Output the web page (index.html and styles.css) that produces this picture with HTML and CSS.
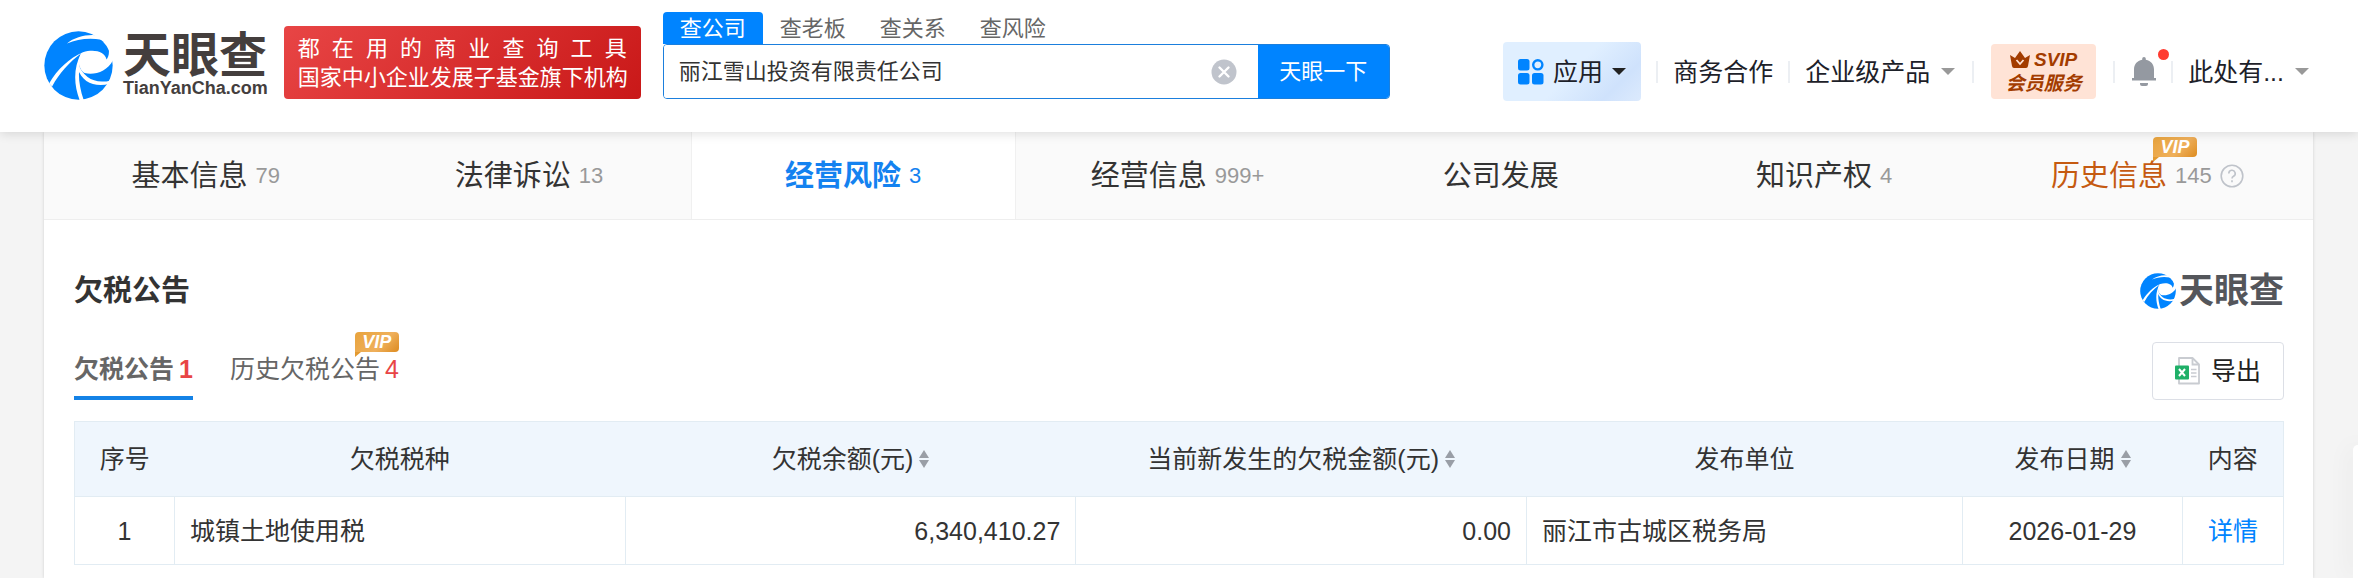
FILE: index.html
```html
<!DOCTYPE html>
<html lang="zh-CN">
<head>
  <meta charset="UTF-8">
  <title>天眼查</title>
  <link rel="stylesheet" href="styles.css">
</head>
<body>

  <!-- Shared logo mark -->
  <svg class="defs" width="0" height="0" aria-hidden="true">
    <symbol id="mark" viewBox="0 0 204 204">
      <circle cx="102" cy="102" r="101" fill="#0084ff"/>
      <path fill="#fff" d="M68 37C92 17 130 8 164 14L170 26C134 19 98 24 68 37Z"/>
      <path fill="#fff" d="M206 48L191 50C194 68 190 78 185 84C180 62 150 52 115 63C75 80 40 113 15 155L24 164C45 125 75 92 110 66C98 85 104 118 120 124C150 132 190 118 206 82Z"/>
      <path fill="#fff" d="M110 66C86 110 88 160 106 206L118 206C104 165 100 130 106 100Z"/>
      <path fill="#fff" d="M102 100C118 138 150 158 198 146L194 156C150 168 112 150 100 112Z"/>
    </symbol>
  </svg>

  <!-- Header -->
  <header class="header">
    <a class="logo" href="#">
      <svg class="logo-mark"><use href="#mark"/></svg>
      <span class="logo-text">
        <span class="logo-name">天眼查</span>
        <span class="logo-domain">TianYanCha.com</span>
      </span>
    </a>
    <div class="slogan">
      <p>都在用的商业查询工具</p>
      <p>国家中小企业发展子基金旗下机构</p>
    </div>

    <form class="search">
      <div class="search-tabs">
        <button type="button" class="search-tab active">查公司</button>
        <button type="button" class="search-tab">查老板</button>
        <button type="button" class="search-tab">查关系</button>
        <button type="button" class="search-tab">查风险</button>
      </div>
      <div class="search-box">
        <input class="search-input" type="text" value="丽江雪山投资有限责任公司" aria-label="搜索公司">
        <button type="button" class="search-clear" aria-label="清空">
          <svg width="26" height="26" viewBox="0 0 26 26"><circle cx="13" cy="13" r="12.5" fill="#c0c4cc"/><path d="M8.5 8.5l9 9M17.5 8.5l-9 9" stroke="#fff" stroke-width="2.4" stroke-linecap="round"/></svg>
        </button>
        <button type="submit" class="search-submit">天眼一下</button>
      </div>
    </form>

    <nav class="nav">
      <button type="button" class="nav-app">
        <svg width="26" height="26" viewBox="0 0 26 26" fill="#0084ff">
          <rect x="0" y="0" width="11.5" height="11.5" rx="2.5"/>
          <rect x="0" y="14" width="11.5" height="11.5" rx="2.5"/>
          <rect x="14" y="14" width="11.5" height="11.5" rx="2.5"/>
          <circle cx="19.8" cy="5.8" r="4.6" fill="none" stroke="#0084ff" stroke-width="2.4"/>
        </svg>
        <span>应用</span>
        <i class="caret dark"></i>
      </button>
      <i class="divider"></i>
      <a class="nav-link" href="#">商务合作</a>
      <i class="divider"></i>
      <button type="button" class="nav-link">企业级产品<i class="caret"></i></button>
      <i class="divider wide"></i>
      <a class="svip" href="#">
        <span class="svip-top">
          <svg width="20" height="17" viewBox="0 0 20 17"><path d="M0 4l5 3 5-7 5 7 5-3-2 11q-.3 2-2 2H4q-1.700 0-2-2z" fill="#a33c00"/><path d="M6.500 9l3.500 4 3.500-4" fill="none" stroke="#ffe3d6" stroke-width="1.800"/></svg>
          <b>SVIP</b>
        </span>
        <span class="svip-bottom">会员服务</span>
      </a>
      <i class="divider wide"></i>
      <button type="button" class="bell" aria-label="消息">
        <svg width="24" height="30" viewBox="0 0 24 30" fill="#9499a1"><path d="M12 0a1.800 1.800 0 0 1 1.800 1.800v.9C19 3.600 22 7.500 22 12.500V21h2v2.500H0V21h2v-8.500C2 7.500 5 3.600 10.200 2.700v-.9A1.800 1.800 0 0 1 12 0z"/><path d="M8 26h8v1q0 2-2 2h-4q-2 0-2-2z"/></svg>
        <i class="bell-dot"></i>
      </button>
      <i class="divider"></i>
      <button type="button" class="nav-link">此处有...<i class="caret"></i></button>
    </nav>
  </header>

  <main class="container">
    <!-- Section tabs -->
    <nav class="tabs">
      <a class="tab" href="#">基本信息<span class="tab-count">79</span></a>
      <a class="tab" href="#">法律诉讼<span class="tab-count">13</span></a>
      <a class="tab active" href="#">经营风险<span class="tab-count">3</span></a>
      <a class="tab" href="#">经营信息<span class="tab-count">999+</span></a>
      <a class="tab" href="#">公司发展</a>
      <a class="tab" href="#">知识产权<span class="tab-count">4</span></a>
      <a class="tab history" href="#">
        <span class="tab-label">历史信息<em class="vip">VIP</em></span><span class="tab-count">145</span>
        <svg class="help" width="24" height="24" viewBox="0 0 24 24" fill="none" stroke="#bfc3ca" stroke-width="1.600"><circle cx="12" cy="12" r="10.800"/><path d="M8.800 9.500a3.200 3.200 0 1 1 4.700 2.800q-1.500.8-1.500 2.200"/><path d="M12 16.300v1.900"/></svg>
      </a>
    </nav>

    <section class="section">
      <div class="section-head">
        <h2>欠税公告</h2>
        <div class="brand">
          <svg class="brand-mark"><use href="#mark"/></svg>
          <span>天眼查</span>
        </div>
      </div>

      <div class="toolbar">
        <div class="subtabs">
          <a class="subtab active" href="#">欠税公告<span class="num">1</span></a>
          <a class="subtab" href="#">历史欠税公告<span class="num">4</span><em class="vip">VIP</em></a>
        </div>
        <button type="button" class="export">
          <svg width="26" height="28" viewBox="0 0 26 28"><path d="M4 1h13.500L24 7.500V26.500H4z" fill="#fff" stroke="#c9ccd1" stroke-width="1.800" stroke-linejoin="round"/><path d="M17.500 1v6.500H24" fill="none" stroke="#c9ccd1" stroke-width="1.800"/><path d="M16 12.500h5.500M16 16h5.500M16 19.500h5.500" stroke="#c9ccd1" stroke-width="1.500"/><rect x="0" y="8.500" width="14" height="14" rx="1" fill="#1fb068"/><path d="M4 12l6 7M10 12l-6 7" stroke="#fff" stroke-width="2"/></svg>
          <span>导出</span>
        </button>
      </div>

      <table class="table">
        <thead>
          <tr>
            <th class="col-index">序号</th>
            <th>欠税税种</th>
            <th><button type="button" class="sort">欠税余额(元)<i class="sort-icon"></i></button></th>
            <th><button type="button" class="sort">当前新发生的欠税金额(元)<i class="sort-icon"></i></button></th>
            <th class="col-unit">发布单位</th>
            <th class="col-date"><button type="button" class="sort">发布日期<i class="sort-icon"></i></button></th>
            <th class="col-action">内容</th>
          </tr>
        </thead>
        <tbody>
          <tr>
            <td class="center">1</td>
            <td>城镇土地使用税</td>
            <td class="right">6,340,410.27</td>
            <td class="right">0.00</td>
            <td>丽江市古城区税务局</td>
            <td class="center">2026-01-29</td>
            <td class="center"><a class="detail" href="#">详情</a></td>
          </tr>
        </tbody>
      </table>
    </section>
  </main>

  <aside class="side-panel"></aside>

</body>
</html>
```
FILE: styles.css
```css
* {
  box-sizing: border-box;
}
body {
  margin: 0;
  min-height: 100vh;
  display: flex;
  flex-direction: column;
  overflow: hidden;
  background: #f4f4f4;
  color: #333;
  font-family: "Liberation Sans", "Noto Sans CJK SC", sans-serif;
  font-size: 25px;
  line-height: 36px;
}
a {
  color: inherit;
  text-decoration: none;
}
button {
  padding: 0;
  border: none;
  background: none;
  color: inherit;
  font: inherit;
  cursor: pointer;
}
h2, p {
  margin: 0;
}
em, i {
  font-style: normal;
}
.defs {
  position: absolute;
}

/* Header */
.header {
  position: relative;
  z-index: 2;
  display: flex;
  align-items: flex-end;
  padding: 12px 49px 33px 44px;
  background: #fff;
  box-shadow: 0 2px 10px rgba(0, 0, 0, 0.12);
}
.logo {
  display: flex;
  align-items: center;
  gap: 10px;
  height: 68px;
  color: #443e3d;
  font-weight: bold;
}
.logo-mark {
  width: 69px;
  height: 69px;
}
.logo-text {
  display: flex;
  flex-direction: column;
}
.logo-name {
  font-size: 48px;
  line-height: 46px;
}
.logo-domain {
  font-size: 18px;
  line-height: 18px;
}
.slogan {
  width: 357px;
  height: 73px;
  margin-left: 16px;
  padding: 8px 14px;
  border-radius: 4px;
  background: linear-gradient(135deg, #e84545, #c91818);
  color: #fff;
  font-size: 22px;
  line-height: 29px;
  white-space: nowrap;
}
.slogan p {
  text-align-last: justify;
}
.search {
  flex: none;
  width: 727px;
  margin-left: 22px;
  font-size: 22px;
}
.search-tabs {
  display: flex;
}
.search-tab {
  width: 100px;
  height: 32px;
  border-radius: 4px 4px 0 0;
  color: #666;
  line-height: 34px;
}
.search-tab.active {
  background: #0084ff;
  color: #fff;
}
.search-box {
  display: flex;
  height: 55px;
  border: 1px solid #1b7fdd;
  border-radius: 4px;
  overflow: hidden;
}
.search-input {
  flex: 1;
  min-width: 0;
  padding: 0 15px;
  border: none;
  outline: none;
  color: #333;
  font: inherit;
}
.search-clear {
  display: flex;
  align-items: center;
  margin-right: 21px;
}
.search-submit {
  width: 131px;
  background: #0084ff;
  color: #fff;
}

/* Header navigation */
.nav {
  display: flex;
  align-items: center;
  height: 55px;
  margin-left: auto;
  color: #1d2129;
  white-space: nowrap;
}
.nav-app {
  display: flex;
  align-items: center;
  gap: 9px;
  height: 59px;
  padding: 0 15px;
  border-radius: 4px;
  background: linear-gradient(135deg, #e0efff 50%, #cfe2fc 80%, #dceafd);
}
.nav-link {
  display: flex;
  align-items: center;
  gap: 11px;
}
.caret {
  width: 0;
  height: 0;
  border: 7px solid transparent;
  border-top-color: #999;
  border-bottom: none;
}
.caret.dark {
  border-top-color: #222;
}
.divider {
  width: 2px;
  height: 22px;
  margin: 0 15px;
  background: #eceff3;
}
.divider.wide {
  margin: 0 17px;
}
.svip {
  display: flex;
  flex-direction: column;
  align-items: center;
  justify-content: center;
  width: 105px;
  height: 55px;
  border-radius: 4px;
  background: #ffe3d6;
  color: #a33c00;
  font-size: 19px;
  font-weight: bold;
  font-style: italic;
  line-height: 24px;
}
.svip-top {
  display: flex;
  align-items: center;
  gap: 4px;
}
.bell {
  position: relative;
  display: flex;
}
.bell-dot {
  position: absolute;
  top: -8px;
  right: -13px;
  width: 11px;
  height: 11px;
  border-radius: 50%;
  background: #ff3b30;
}

/* Content */
.container {
  flex: 1;
  margin: 0 45px 0 44px;
  background: #fff;
  box-shadow: 0 0 3px rgba(0, 0, 0, 0.15);
}
.tabs {
  display: flex;
  height: 88px;
  padding-right: 4px;
  border-bottom: 1px solid #eee;
  background: #fafafa;
  font-size: 29px;
}
.tab {
  flex: 1;
  display: flex;
  align-items: center;
  justify-content: center;
  gap: 8px;
}
.tab.active {
  border: 1px solid #f0f0f0;
  border-width: 0 1px;
  background: #fff;
  color: #1482f0;
  font-weight: bold;
}
.tab-count {
  color: #999;
  font-size: 22px;
  font-weight: normal;
}
.tab.active .tab-count {
  color: #1482f0;
}
.tab.history {
  color: #c55a11;
}
.tab-label {
  position: relative;
}
.vip {
  position: absolute;
  top: -21px;
  right: -30px;
  width: 44px;
  height: 20px;
  border-radius: 4px 4px 4px 0;
  background: linear-gradient(135deg, #e8a33c, #efb05c 60%, #dd8b1f);
  color: #fff;
  font-size: 18px;
  font-style: italic;
  font-weight: bold;
  line-height: 20px;
  text-align: center;
}
.vip::after {
  content: "";
  position: absolute;
  top: 20px;
  left: 0;
  border-top: 5px solid #e39a30;
  border-right: 6px solid transparent;
}
.section {
  padding: 50px 29px 0 30px;
}
.section-head {
  display: flex;
  align-items: center;
  justify-content: space-between;
}
.section-head h2 {
  font-size: 29px;
  line-height: 42px;
}
.brand {
  display: flex;
  align-items: center;
  gap: 3px;
  color: #54565b;
  font-size: 35px;
  font-weight: bold;
}
.brand-mark {
  width: 36px;
  height: 36px;
}
.toolbar {
  display: flex;
  align-items: flex-end;
  justify-content: space-between;
  margin-top: 30px;
}
.subtabs {
  display: flex;
  gap: 37px;
  color: #666;
}
.subtab {
  position: relative;
  display: flex;
  gap: 5px;
  height: 49px;
}
.subtab.active {
  border-bottom: 4px solid #1482e6;
  font-weight: bold;
}
.subtab .vip {
  top: -19px;
  right: 0;
}
.num {
  color: #e84545;
}
.export {
  display: flex;
  align-items: center;
  gap: 10px;
  height: 58px;
  padding: 0 22px;
  border: 1px solid #dcdfe6;
  border-radius: 4px;
  color: #222;
}

/* Table */
.table {
  width: 100%;
  margin-top: 21px;
  border: 1px solid #e2ecf3;
  border-collapse: collapse;
  table-layout: fixed;
}
.table th {
  height: 75px;
  padding: 0;
  border-bottom: 1px solid #e2ecf3;
  background: #eff6fd;
  font-weight: normal;
}
.table td {
  height: 68px;
  padding: 0 15px;
  border: 1px solid #e2ecf3;
}
.col-index {
  width: 100px;
}
.col-unit {
  width: 436px;
}
.col-date {
  width: 220px;
}
.col-action {
  width: 101px;
}
.table .center {
  text-align: center;
}
.table .right {
  text-align: right;
}
.sort {
  display: inline-flex;
  align-items: center;
  gap: 6px;
}
.sort-icon {
  display: grid;
  gap: 2px;
}
.sort-icon::before,
.sort-icon::after {
  content: "";
  border: 5px solid transparent;
}
.sort-icon::before {
  border-top: none;
  border-bottom: 8px solid #999ea6;
}
.sort-icon::after {
  border-bottom: none;
  border-top: 8px solid #999ea6;
}
.detail {
  color: #0084ff;
}

/* Floating side panel, mostly off the right edge */
.side-panel {
  position: fixed;
  right: 0;
  bottom: 0;
  width: 5px;
  height: 133px;
  border-radius: 5px 0 0 0;
  background: #fff;
  box-shadow: 0 0 24px rgba(0, 0, 0, 0.12);
}
```
